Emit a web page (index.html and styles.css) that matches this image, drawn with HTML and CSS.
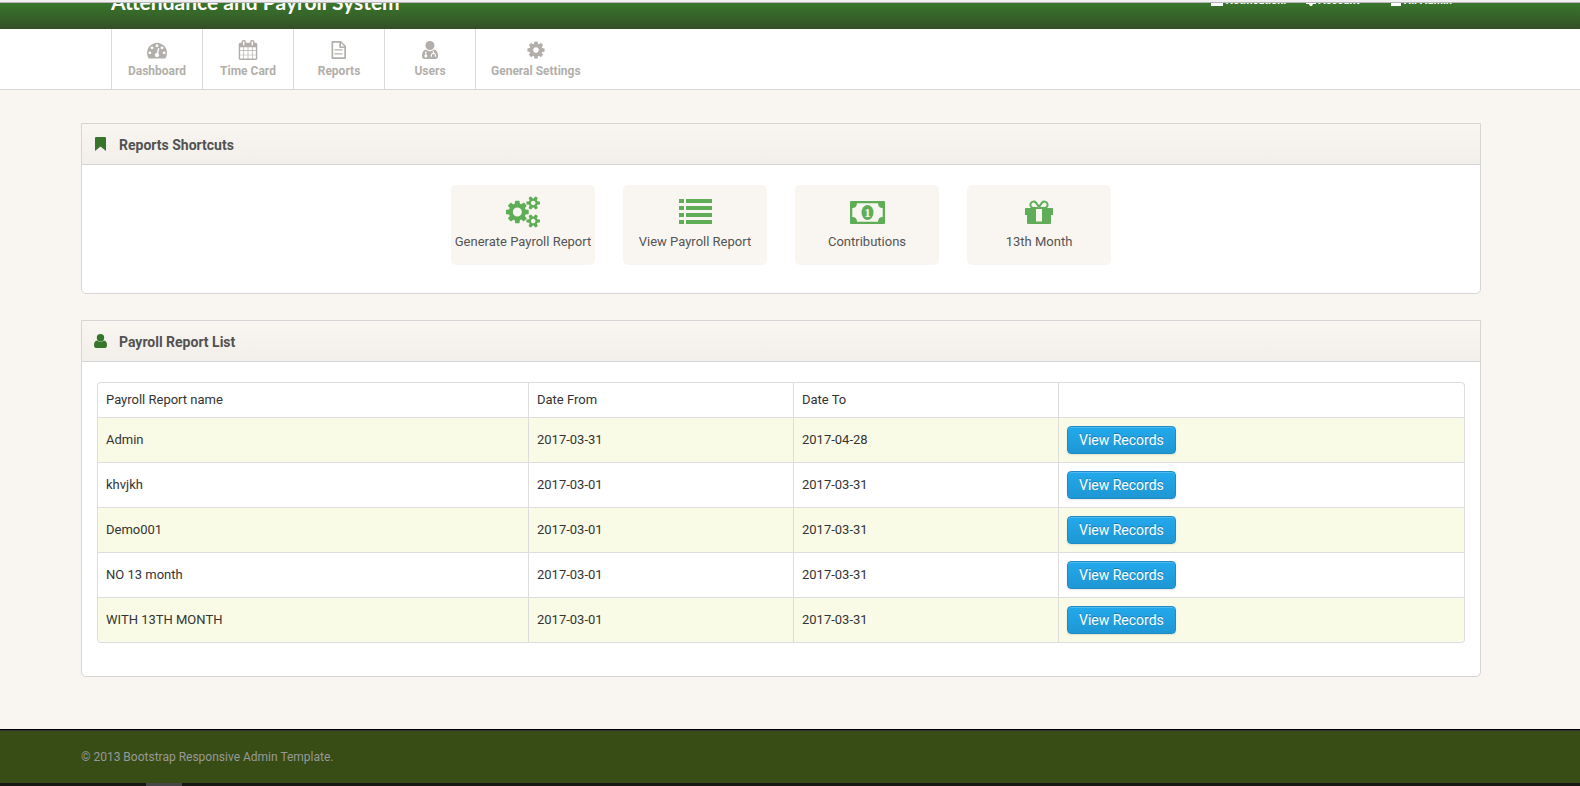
FILE: index.html
```
<!DOCTYPE html>
<html lang="en">
<head>
  <meta charset="utf-8">
  <title>Attendance and Payroll System</title>
  <link rel="stylesheet" href="styles.css">
</head>
<body>

  <div class="window-edge"></div>

  <header class="navbar">
    <div class="container navbar-inner">
      <a class="brand" href="#">Attendance and Payroll System</a>
      <nav class="top-links">
        <a href="#">
          <svg width="12" height="12" viewBox="0 0 12 12"><path d="M1 2h10v6h1v3H0V8h1z"/></svg>
          Notification!
        </a>
        <a href="#">
          <svg width="10" height="12" viewBox="0 0 10 12"><path d="M1 2h8v6h1v1H7l-1 2H4L3 9H0V8h1z"/></svg>
          Account <b class="caret"></b>
        </a>
        <a href="#">
          <svg width="10" height="12" viewBox="0 0 10 12"><circle cx="5" cy="4" r="3"/><path d="M0 7h10v4H0z"/></svg>
          Hi! Admin <b class="caret"></b>
        </a>
      </nav>
    </div>
  </header>

  <nav class="subnavbar">
    <ul class="container mainnav">
      <li><a href="#">
        <svg width="20" height="20" viewBox="0 0 1792 1792"><path d="M384 1152q0-53-37.5-90.5t-90.5-37.5-90.5 37.5-37.5 90.5 37.5 90.5 90.5 37.5 90.5-37.5 37.5-90.5zm192-448q0-53-37.5-90.5t-90.5-37.5-90.5 37.5-37.5 90.5 37.5 90.5 90.5 37.5 90.5-37.5 37.5-90.5zm428 481l101-382q6-26-7.5-48.5t-38.5-29.5-48 6.5-30 39.5l-101 382q-60 5-107 43.5t-63 98.5q-20 77 20 146t117 89 146-20 89-117q16-60-6-117t-72-91zm660-33q0-53-37.5-90.5t-90.5-37.5-90.5 37.5-37.5 90.5 37.5 90.5 90.5 37.5 90.5-37.5 37.5-90.5zm-640-640q0-53-37.5-90.5t-90.5-37.5-90.5 37.5-37.5 90.5 37.5 90.5 90.5 37.5 90.5-37.5 37.5-90.5zm448 192q0-53-37.5-90.5t-90.5-37.5-90.5 37.5-37.5 90.5 37.5 90.5 90.5 37.5 90.5-37.5 37.5-90.5zm320 448q0 261-141 483-19 29-54 29h-1402q-35 0-54-29-141-221-141-483 0-182 71-348t191-286 286-191 348-71 348 71 286 191 191 286 71 348z"/></svg>
        <span>Dashboard</span>
      </a></li>
      <li><a href="#">
        <svg width="20" height="20" viewBox="0 0 1792 1792"><path d="M192 1664h288v-288h-288v288zm352 0h320v-288h-320v288zm-352-352h288v-320h-288v320zm352 0h320v-320h-320v320zm-352-384h288v-288h-288v288zm736 736h320v-288h-320v288zm-384-736h320v-288h-320v288zm768 736h288v-288h-288v288zm-384-352h320v-320h-320v320zm-352-864v-288q0-13-9.500-22.500t-22.500-9.500h-64q-13 0-22.500 9.500t-9.500 22.500v288q0 13 9.500 22.500t22.500 9.500h64q13 0 22.500-9.500t9.500-22.500zm736 864h288v-320h-288v320zm-384-384h320v-288h-320v288zm384 0h288v-288h-288v288zm32-480v-288q0-13-9.500-22.500t-22.500-9.500h-64q-13 0-22.500 9.500t-9.500 22.500v288q0 13 9.500 22.500t22.500 9.500h64q13 0 22.500-9.500t9.500-22.500zm384-64v1280q0 52-38 90t-90 38h-1408q-52 0-90-38t-38-90v-1280q0-52 38-90t90-38h128v-96q0-66 47-113t113-47h64q66 0 113 47t47 113v96h384v-96q0-66 47-113t113-47h64q66 0 113 47t47 113v96h128q52 0 90 38t38 90z"/></svg>
        <span>Time Card</span>
      </a></li>
      <li><a href="#">
        <svg width="20" height="20" viewBox="0 0 20 20"><path fill-rule="evenodd" d="M3.500 1h8.500l5 5v12q0 1-1 1H3.500q-1 0-1-1V2q0-1 1-1zM4.200 2.700v14.600h11.100V8h-4q-1 0-1-1V2.700zM12 3v3.400h3.400zM5.500 9.200h8v1.400h-8zM5.500 13.200h8v1.400h-8z"/></svg>
        <span>Reports</span>
      </a></li>
      <li><a href="#">
        <svg width="20" height="20" viewBox="0 0 20 20"><circle cx="10" cy="5.500" r="4.500"/><path fill-rule="evenodd" d="M5.800 9.500Q10 13 14.200 9.500 18 10.500 18 16q0 3-2.500 3h-11Q2 19 2 16q0-5.500 3.800-6.500zM5.200 11.500v3.200a1.500 1.500 0 1 0 1.200 0v-3.400zM12.800 11.300v1.600q-2 .4-2 2.300v1.500h1.200v-1.500q0-1.200 1.400-1.200t1.400 1.200v1.500h1.200v-1.500q0-1.900-2-2.300v-1.800z"/></svg>
        <span>Users</span>
      </a></li>
      <li><a href="#">
        <svg width="20" height="20" viewBox="0 0 1792 1792"><path d="M1152 896q0-106-75-181t-181-75-181 75-75 181 75 181 181 75 181-75 75-181zm512-109v222q0 12-8 23t-20 13l-185 28q-19 54-39 91 35 50 107 138 10 12 10 25t-9 23q-27 37-99 108t-94 71q-12 0-26-9l-138-108q-44 23-91 38-16 136-29 186-7 28-36 28h-222q-14 0-24.500-8.500t-11.500-21.500l-28-184q-49-16-90-37l-141 107q-10 9-25 9-14 0-25-11-126-114-165-168-7-10-7-23 0-12 8-23 15-21 51-66.500t54-70.500q-27-50-41-99l-183-27q-13-2-21-12.500t-8-23.500v-222q0-12 8-23t19-13l186-28q14-46 39-92-40-57-107-138-10-12-10-24 0-10 9-23 26-36 98.500-107.500t94.500-71.500q13 0 26 10l138 107q44-23 91-38 16-136 29-186 7-28 36-28h222q14 0 24.500 8.500t11.500 21.500l28 184q49 16 90 37l142-107q9-9 24-9 13 0 25 10 129 119 165 170 7 8 7 22 0 12-8 23-15 21-51 66.500t-54 70.500q26 50 41 98l183 28q13 2 21 12.500t8 23.500z"/></svg>
        <span>General Settings</span>
      </a></li>
    </ul>
  </nav>

  <main class="main">
    <div class="container">

      <section class="widget">
        <div class="widget-header">
          <svg width="14" height="14" viewBox="0 0 14 14"><path d="M2 0h9q1 0 1 1v13l-5.500-4.500L1 14V1q0-1 1-1z"/></svg>
          <h3>Reports Shortcuts</h3>
        </div>
        <div class="widget-content shortcuts">
          <a class="shortcut" href="#">
            <svg width="34" height="32" viewBox="-64 0 1920 1792"><path d="M832 896q0-106-75-181t-181-75-181 75-75 181 75 181 181 75 181-75 75-181zm768 512q0-52-38-90t-90-38-90 38-38 90q0 53 37.500 90.500t90.500 37.500 90.500-37.500 37.500-90.500zm0-1024q0-52-38-90t-90-38-90 38-38 90q0 53 37.500 90.500t90.500 37.500 90.500-37.500 37.500-90.500zm-384 421v185q0 10-7 19.500t-16 10.500l-155 24q-11 35-32 76 34 48 90 115 7 11 7 20 0 12-7 19-23 30-82.500 89.500t-78.500 59.500q-11 0-21-7l-115-90q-37 19-77 31-11 108-23 155-7 24-30 24h-186q-11 0-20-7.500t-10-17.500l-23-153q-34-10-75-31l-118 89q-7 7-20 7-11 0-21-8-144-133-144-160 0-9 7-19 10-14 41-53t47-61q-23-44-35-82l-152-24q-10-1-17-9.500t-7-19.500v-185q0-10 7-19.500t16-10.500l155-24q11-35 32-76-34-48-90-115-7-11-7-20 0-12 7-20 22-30 82-89t79-59q11 0 21 7l115 90q34-18 77-32 11-108 23-154 7-24 30-24h186q11 0 20 7.500t10 17.500l23 153q34 10 75 31l118-89q8-7 20-7 11 0 21 8 144 133 144 160 0 8-7 19-12 16-42 54t-45 60q23 48 34 82l152 23q10 2 17 10.500t7 19.500zm640 533v140q0 16-149 31-12 27-30 52 51 113 51 138 0 4-4 7-122 71-124 71-8 0-46-47t-52-68q-20 2-30 2t-30-2q-14 21-52 68t-46 47q-2 0-124-71-4-3-4-7 0-25 51-138-18-25-30-52-149-15-149-31v-140q0-16 149-31 13-29 30-52-51-113-51-138 0-4 4-7 4-2 35-20t59-34 30-16q8 0 46 46.500t52 67.500q20-2 30-2t30 2q51-71 92-112l6-2q4 0 124 70 4 3 4 7 0 25-51 138 17 23 30 52 149 15 149 31zm0-1024v140q0 16-149 31-12 27-30 52 51 113 51 138 0 4-4 7-122 71-124 71-8 0-46-47t-52-68q-20 2-30 2t-30-2q-14 21-52 68t-46 47q-2 0-124-71-4-3-4-7 0-25 51-138-18-25-30-52-149-15-149-31v-140q0-16 149-31 13-29 30-52-51-113-51-138 0-4 4-7 4-2 35-20t59-34 30-16q8 0 46 46.500t52 67.500q20-2 30-2t30 2q51-71 92-112l6-2q4 0 124 70 4 3 4 7 0 25-51 138 17 23 30 52 149 15 149 31z"/></svg>
            <span>Generate Payroll Report</span>
          </a>
          <a class="shortcut" href="#">
            <svg width="33" height="32" viewBox="0 0 33 32"><path d="M0 3h5v4H0zM7 3h26v4H7zM0 10h5v4H0zM7 10h26v4H7zM0 17h5v4H0zM7 17h26v4H7zM0 24h5v4H0zM7 24h26v4H7z"/></svg>
            <span>View Payroll Report</span>
          </a>
          <a class="shortcut" href="#">
            <svg width="35" height="32" viewBox="0 0 35 32"><path fill-rule="evenodd" d="M1 5h33q1 0 1 1v21q0 1-1 1H1q-1 0-1-1V6q0-1 1-1zM7 7.300Q7 12 2.300 12v9Q7 21 7 25.700h21q0-4.700 4.700-4.700v-9Q28 12 28 7.300z"/><ellipse cx="17.500" cy="16.500" rx="6" ry="7.500"/><text class="bill-value" x="17.500" y="21" text-anchor="middle">1</text></svg>
            <span>Contributions</span>
          </a>
          <a class="shortcut" href="#">
            <svg width="28" height="32" viewBox="0 0 28 32"><path fill-rule="evenodd" d="M1 12h26q1 0 1 1v6h-2v8q0 1-1 1H3q-1 0-1-1v-8H0v-6q0-1 1-1zM11 13v12.500h6V13z"/><path class="bow" d="M13 12H8.500a3.200 3.200 0 1 1 2.500-5.300L14 11l3-4.300a3.200 3.200 0 1 1 2.500 5.300H15"/></svg>
            <span>13th Month</span>
          </a>
        </div>
      </section>

      <section class="widget">
        <div class="widget-header">
          <svg width="14" height="14" viewBox="0 0 14 14"><circle cx="6.500" cy="3.700" r="3.700"/><path d="M3 6.500q3.500 2.700 7 0 3 .5 3 4.500 0 3-2 3H2q-2 0-2-3 0-4 3-4.500z"/></svg>
          <h3>Payroll Report List</h3>
        </div>
        <div class="widget-content report-list">
          <table class="table">
            <thead>
              <tr>
                <th class="col-name">Payroll Report name</th>
                <th class="col-date">Date From</th>
                <th class="col-date">Date To</th>
                <th></th>
              </tr>
            </thead>
            <tbody>
              <tr>
                <td>Admin</td>
                <td>2017-03-31</td>
                <td>2017-04-28</td>
                <td><button class="btn" type="button">View Records</button></td>
              </tr>
              <tr>
                <td>khvjkh</td>
                <td>2017-03-01</td>
                <td>2017-03-31</td>
                <td><button class="btn" type="button">View Records</button></td>
              </tr>
              <tr>
                <td>Demo001</td>
                <td>2017-03-01</td>
                <td>2017-03-31</td>
                <td><button class="btn" type="button">View Records</button></td>
              </tr>
              <tr>
                <td>NO 13 month</td>
                <td>2017-03-01</td>
                <td>2017-03-31</td>
                <td><button class="btn" type="button">View Records</button></td>
              </tr>
              <tr>
                <td>WITH 13TH MONTH</td>
                <td>2017-03-01</td>
                <td>2017-03-31</td>
                <td><button class="btn" type="button">View Records</button></td>
              </tr>
            </tbody>
          </table>
        </div>
      </section>

    </div>
  </main>

  <footer class="footer">
    <div class="container">&copy; 2013 Bootstrap Responsive Admin Template.</div>
  </footer>

  <div class="taskbar"><div class="taskbar-item"></div></div>

</body>
</html>
```
FILE: styles.css
```
* {
  box-sizing: border-box;
}
body {
  margin: 0;
  min-height: 100vh;
  display: flex;
  flex-direction: column;
  background: #f9f6f1;
  color: #333;
  font: 13px/18px "Trebuchet MS", Roboto, sans-serif;
}
a {
  color: inherit;
  text-decoration: none;
}
svg {
  display: block;
  fill: currentColor;
}
.container {
  width: 100%;
  max-width: 1400px;
  margin: 0 auto;
}

.navbar,
.subnavbar,
.main,
.footer {
  padding-right: 18px;
}

.window-edge {
  height: 3px;
  background: #f1f1f1;
  border-bottom: 1px solid #b9b4b9;
}

/* Header, scrolled partly out of view */
.navbar {
  height: 26px;
  overflow: hidden;
  background: linear-gradient(#39762c, #345026);
  color: #fff;
}
.navbar-inner {
  display: flex;
  justify-content: space-between;
  margin-top: -11px;
  padding: 0 17px 0 30px;
}
.brand {
  font: bold 21px/20px "Trebuchet MS", Lato, sans-serif;
}
.top-links {
  display: flex;
  align-items: flex-start;
  gap: 20px;
  font-size: 11px;
  font-weight: bold;
  line-height: 18px;
}
.top-links a {
  display: flex;
  align-items: center;
  gap: 2px;
}
.caret {
  margin-left: 4px;
  border: 3px solid transparent;
  border-top-color: #7d9f75;
}

/* Main menu */
.subnavbar {
  background: #fff;
  border-bottom: 1px solid #d6d6d6;
}
.mainnav {
  display: flex;
  padding: 0 30px;
  list-style: none;
}
.mainnav li {
  min-width: 91px;
  border-left: 1px solid #d9d9d9;
}
.mainnav a {
  display: flex;
  flex-direction: column;
  align-items: center;
  gap: 1px;
  padding: 11px 15px 8px;
  color: #b2afaa;
  font-size: 12px;
  font-weight: bold;
  line-height: 20px;
}

/* Widgets */
.main {
  flex: 1;
  padding-top: 33px;
  padding-bottom: 26px;
}
.widget {
  margin-bottom: 26px;
  background: #fff;
  border: 1px solid #d5d5d5;
  border-radius: 0 0 5px 5px;
}
.widget-header {
  display: flex;
  align-items: center;
  gap: 11px;
  height: 41px;
  padding: 0 12px;
  background: linear-gradient(#f9f6f1, #f2efea);
  border-bottom: 1px solid #d5d5d5;
  color: #37752a;
}
.widget-header h3 {
  margin: 0;
  padding-top: 2px;
  color: #525252;
  font-size: 14px;
  line-height: 18px;
}

.shortcuts {
  display: flex;
  justify-content: center;
  gap: 28px;
  padding: 20px 15px 28px;
}
.shortcut {
  display: flex;
  flex-direction: column;
  align-items: center;
  gap: 4px;
  width: 144px;
  padding: 11px 0 13px;
  background: #f9f6f1;
  border-radius: 5px;
  color: #545454;
  line-height: 20px;
  white-space: nowrap;
}
.shortcut svg {
  fill: #5fad56;
}
.shortcut .bill-value {
  fill: #f9f6f1;
  font: bold 13px "Liberation Serif", serif;
}
.shortcut .bow {
  fill: none;
  stroke: #5fad56;
  stroke-width: 2;
}

.report-list {
  padding: 20px 15px 33px;
}
.table {
  width: 100%;
  table-layout: fixed;
  border-spacing: 0;
  border: 1px solid #ddd;
  border-top: 0;
  border-left: 0;
  border-radius: 4px;
}
.table th,
.table td {
  padding: 8px;
  border-top: 1px solid #ddd;
  border-left: 1px solid #ddd;
  font-weight: normal;
  text-align: left;
  vertical-align: middle;
}
.table thead tr:first-child th:first-child {
  border-top-left-radius: 4px;
}
.table thead tr:first-child th:last-child {
  border-top-right-radius: 4px;
}
.table tbody tr:last-child td:first-child {
  border-bottom-left-radius: 4px;
}
.table tbody tr:last-child td:last-child {
  border-bottom-right-radius: 4px;
}
.table tbody tr:nth-child(odd) td {
  background: #fafbe6;
}
.col-name {
  width: 431px;
}
.col-date {
  width: 265px;
}

.btn {
  display: block;
  height: 28px;
  padding: 0 11px;
  background: linear-gradient(#22a9ec, #1f97d4);
  border: 1px solid #1f8bc4;
  border-radius: 4px;
  box-shadow: inset 0 1px 0 rgba(255, 255, 255, .2), 0 1px 2px rgba(0, 0, 0, .1);
  color: #fff;
  font: 14px/18px "Trebuchet MS", Roboto, sans-serif;
  text-shadow: 0 -1px 0 rgba(0, 0, 0, .25);
  cursor: pointer;
}

.footer {
  padding-top: 18px;
  padding-bottom: 17px;
  background: #374d15;
  border-top: 1px solid #000;
  box-shadow: inset 0 1px 0 #32323a;
  color: #999;
  font-size: 12px;
}
.taskbar {
  height: 3px;
  padding-left: 146px;
  background: #171912;
}
.taskbar-item {
  width: 36px;
  height: 3px;
  background: #474747;
}
```
